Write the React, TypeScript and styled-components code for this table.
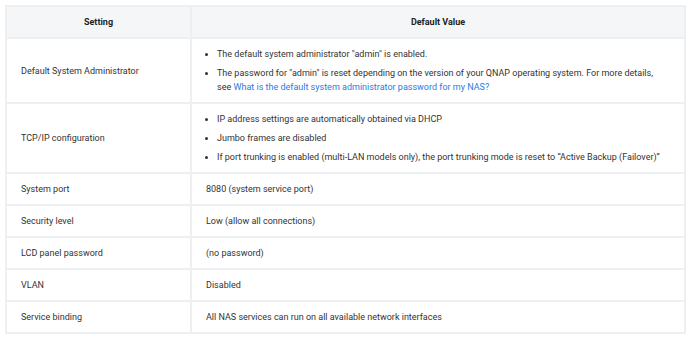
import React from 'react';
import styled, { createGlobalStyle } from 'styled-components';

const GlobalStyle = createGlobalStyle`
    body {
        margin: 0;
        padding: 5px 4px 5px 5px;
        background: #ffffff;
        font-family: Roboto, "Liberation Sans", Arial, sans-serif;
        color: #333333;
    }
`;

const Table = styled.table`
    width: 681px;
    table-layout: fixed;
    border-collapse: collapse;
    border: 2px solid #eeeff1;
    font-size: 9px;
    line-height: 14px;
`;

const NameCol = styled.col`
    width: 185px;
`;

const HeaderCell = styled.th`
    height: 14px;
    padding: 8px 14px;
    background: #f5f6f8;
    border: 2px solid #eeeff1;
    font-weight: 700;
    color: #222222;
    text-align: center;
`;

const NameCell = styled.td`
    padding: 8px 14px;
    border: 2px solid #eeeff1;
    vertical-align: middle;
`;

const ValueCell = styled.td`
    padding: 8px 19px 8px 14px;
    border: 2px solid #eeeff1;
    vertical-align: middle;
`;

const BulletList = styled.ul`
    margin: 0;
    padding-left: 11px;
`;

const Bullet = styled.li`
    margin-top: 5px;

    &:first-child {
        margin-top: 0;
    }
`;

const Link = styled.a`
    color: #2a7be4;
    text-decoration: none;
`;

const rows: { name: string; value: React.ReactNode }[] = [
    {
        name: 'Default System Administrator',
        value: (
            <BulletList>
                <Bullet>The default system administrator "admin" is enabled.</Bullet>
                <Bullet>
                    The password for "admin" is reset depending on the version of your QNAP operating
                    system. For more details, see{' '}
                    <Link href="#">What is the default system administrator password for my NAS?</Link>
                </Bullet>
            </BulletList>
        ),
    },
    {
        name: 'TCP/IP configuration',
        value: (
            <BulletList>
                <Bullet>IP address settings are automatically obtained via DHCP</Bullet>
                <Bullet>Jumbo frames are disabled</Bullet>
                <Bullet>
                    If port trunking is enabled (multi-LAN models only), the port trunking mode is reset
                    to “Active Backup (Failover)”
                </Bullet>
            </BulletList>
        ),
    },
    { name: 'System port', value: '8080 (system service port)' },
    { name: 'Security level', value: 'Low (allow all connections)' },
    { name: 'LCD panel password', value: '(no password)' },
    { name: 'VLAN', value: 'Disabled' },
    { name: 'Service binding', value: 'All NAS services can run on all available network interfaces' },
];

export default function App() {
    return (
        <>
            <GlobalStyle />
            <Table>
                <colgroup>
                    <NameCol />
                    <col />
                </colgroup>
                <thead>
                    <tr>
                        <HeaderCell>Setting</HeaderCell>
                        <HeaderCell>Default Value</HeaderCell>
                    </tr>
                </thead>
                <tbody>
                    {rows.map((row) => (
                        <tr key={row.name}>
                            <NameCell>{row.name}</NameCell>
                            <ValueCell>{row.value}</ValueCell>
                        </tr>
                    ))}
                </tbody>
            </Table>
        </>
    );
}
